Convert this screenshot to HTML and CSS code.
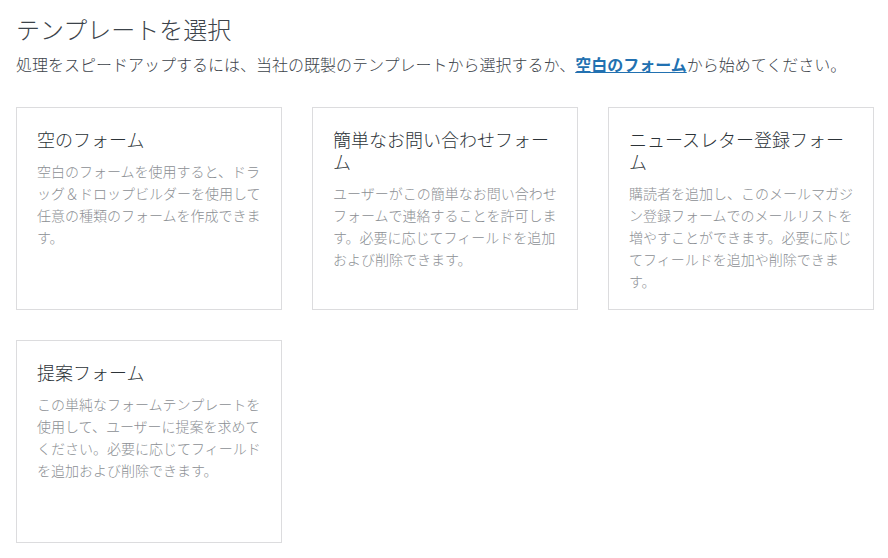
FILE: index.html
```html
<!DOCTYPE html>
<html lang="ja">
<head>
    <meta charset="utf-8">
    <title>テンプレートを選択</title>
    <link rel="stylesheet" href="styles.css">
</head>
<body>
    <div class="container">
        <h1>テンプレートを選択</h1>
        <p class="intro">処理をスピードアップするには、当社の既製のテンプレートから選択するか、<a href="#">空白のフォーム</a>から始めてください。</p>

        <div class="templates">
            <div class="template">
                <h3>空のフォーム</h3>
                <p>空白のフォームを使用すると、ドラッグ＆ドロップビルダーを使用して任意の種類のフォームを作成できます。</p>
            </div>
            <div class="template">
                <h3>簡単なお問い合わせフォーム</h3>
                <p>ユーザーがこの簡単なお問い合わせフォームで連絡することを許可します。必要に応じてフィールドを追加および削除できます。</p>
            </div>
            <div class="template">
                <h3>ニュースレター登録フォーム</h3>
                <p>購読者を追加し、このメールマガジン登録フォームでのメールリストを増やすことができます。必要に応じてフィールドを追加や削除できます。</p>
            </div>
            <div class="template">
                <h3>提案フォーム</h3>
                <p>この単純なフォームテンプレートを使用して、ユーザーに提案を求めてください。必要に応じてフィールドを追加および削除できます。</p>
            </div>
        </div>
    </div>
</body>
</html>
```

FILE: styles.css
```css
body {
    font-family: "Noto Sans CJK JP", "Noto Sans", sans-serif;
    background: #fff;
    margin: 0;
    padding: 13px 16px;
}

h1 {
    margin: 0;
    font-size: 24px;
    font-weight: 300;
    line-height: 31px;
    color: #3c434a;
}

.intro {
    margin: 8px 0 0;
    font-size: 16px;
    font-weight: 300;
    line-height: 24px;
    color: #3c434a;
}

.intro a {
    color: #2271b1;
    font-weight: 700;
    text-decoration: underline;
}

.templates {
    display: grid;
    grid-template-columns: repeat(3, 266px);
    grid-auto-rows: 203px;
    gap: 30px;
    margin-top: 31px;
}

.template {
    box-sizing: border-box;
    border: 1px solid #dcdcde;
    padding: 20px;
}

.template h3 {
    margin: 0;
    font-size: 18px;
    font-weight: 300;
    line-height: 22px;
    color: #2c3338;
}

.template p {
    margin: 10px 0 0;
    font-size: 14px;
    font-weight: 300;
    line-height: 22px;
    color: #8c8f94;
}
```
